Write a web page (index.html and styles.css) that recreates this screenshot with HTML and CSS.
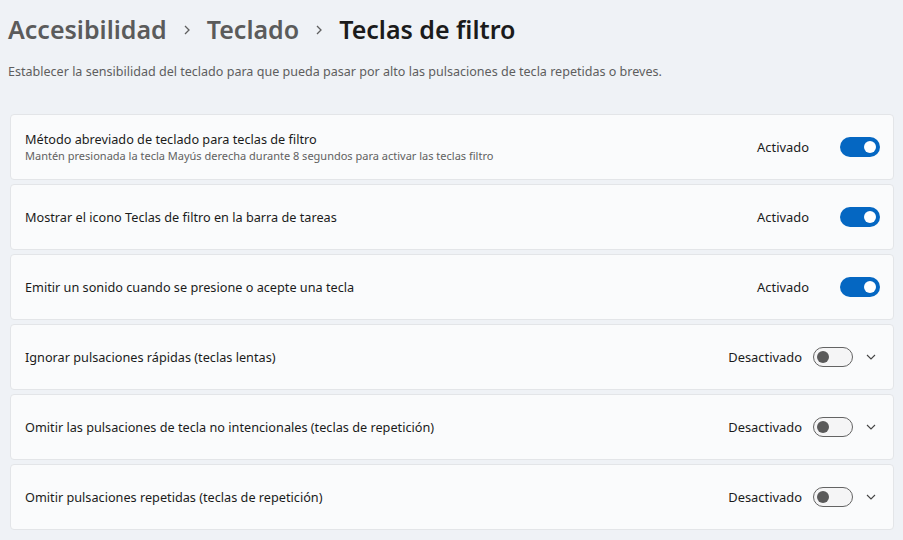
FILE: index.html
```html
<!DOCTYPE html>
<html lang="es">
<head>
<meta charset="utf-8">
<link rel="stylesheet" href="styles.css">
</head>
<body>
<div class="page">
  <h1 class="crumbs">
    <span class="crumb">Accesibilidad</span>
    <svg class="sep" width="10" height="12" viewBox="0 0 10 12"><path d="M3 2 L7 6 L3 10" fill="none" stroke="#5f5f5f" stroke-width="1.3"/></svg>
    <span class="crumb">Teclado</span>
    <svg class="sep" width="10" height="12" viewBox="0 0 10 12"><path d="M3 2 L7 6 L3 10" fill="none" stroke="#5f5f5f" stroke-width="1.3"/></svg>
    <span class="crumb current">Teclas de filtro</span>
  </h1>
  <p class="desc">Establecer la sensibilidad del teclado para que pueda pasar por alto las pulsaciones de tecla repetidas o breves.</p>

  <div class="list">
    <div class="card">
      <div class="text">
        <div class="title">Método abreviado de teclado para teclas de filtro</div>
        <div class="sub">Mantén presionada la tecla Mayús derecha durante 8 segundos para activar las teclas filtro</div>
      </div>
      <div class="ctrl">
        <span class="state">Activado</span>
        <span class="toggle on"><span class="knob"></span></span>
      </div>
    </div>
    <div class="card">
      <div class="text"><div class="title">Mostrar el icono Teclas de filtro en la barra de tareas</div></div>
      <div class="ctrl">
        <span class="state">Activado</span>
        <span class="toggle on"><span class="knob"></span></span>
      </div>
    </div>
    <div class="card">
      <div class="text"><div class="title">Emitir un sonido cuando se presione o acepte una tecla</div></div>
      <div class="ctrl">
        <span class="state">Activado</span>
        <span class="toggle on"><span class="knob"></span></span>
      </div>
    </div>
    <div class="card exp">
      <div class="text"><div class="title">Ignorar pulsaciones rápidas (teclas lentas)</div></div>
      <div class="ctrl">
        <span class="state">Desactivado</span>
        <span class="toggle off"><span class="knob"></span></span>
        <svg class="chev" width="10" height="8" viewBox="0 0 10 8"><path d="M1 2 L5 6 L9 2" fill="none" stroke="#444" stroke-width="1.1"/></svg>
      </div>
    </div>
    <div class="card exp">
      <div class="text"><div class="title">Omitir las pulsaciones de tecla no intencionales (teclas de repetición)</div></div>
      <div class="ctrl">
        <span class="state">Desactivado</span>
        <span class="toggle off"><span class="knob"></span></span>
        <svg class="chev" width="10" height="8" viewBox="0 0 10 8"><path d="M1 2 L5 6 L9 2" fill="none" stroke="#444" stroke-width="1.1"/></svg>
      </div>
    </div>
    <div class="card exp">
      <div class="text"><div class="title">Omitir pulsaciones repetidas (teclas de repetición)</div></div>
      <div class="ctrl">
        <span class="state">Desactivado</span>
        <span class="toggle off"><span class="knob"></span></span>
        <svg class="chev" width="10" height="8" viewBox="0 0 10 8"><path d="M1 2 L5 6 L9 2" fill="none" stroke="#444" stroke-width="1.1"/></svg>
      </div>
    </div>
  </div>
</div>
</body>
</html>
```

FILE: styles.css
```css
* { box-sizing: border-box; }
html, body { margin: 0; padding: 0; }
body {
  background: #eff2f6;
  font-family: "Noto Sans", "Open Sans", sans-serif;
  color: #1b1b1b;
  width: 903px;
  height: 540px;
  overflow: hidden;
}
.page { padding: 10px 9px 0 10px; }
.crumbs {
  margin: 0 0 0 -2px;
  display: flex;
  align-items: center;
  gap: 15px;
  font-weight: 600;
  font-size: 25px;
  line-height: 38px;
  height: 38px;
}
.crumb { color: #5b5b5b; }
.crumb.current { color: #1b1b1b; }
.sep { margin-top: 2px; }
.desc {
  margin: 15px 0 0 -2px;
  font-size: 12.55px;
  line-height: 18px;
  color: #5e5e5e;
}
.list {
  margin-top: 33px;
  display: flex;
  flex-direction: column;
  gap: 4px;
}
.card {
  height: 66px;
  background: #fafbfc;
  border: 1px solid #e3e5e8;
  border-radius: 4px;
  display: flex;
  align-items: center;
  justify-content: space-between;
  padding: 0 13px 0 14px;
}
.card.exp { padding-right: 17px; }
.title { font-size: 12.7px; line-height: 17px; color: #1b1b1b; }
.sub { font-size: 11px; line-height: 15px; color: #616161; }
.ctrl { display: flex; align-items: center; }
.state { font-size: 12.9px; color: #1b1b1b; margin-right: 31px; }
.card.exp .state { margin-right: 11px; }
.toggle {
  width: 40px; height: 20px; border-radius: 10px;
  position: relative; display: inline-block;
}
.toggle.on { background: #0567c2; }
.toggle.off { background: #f5f5f6; border: 1px solid #636363; }
.knob { position: absolute; border-radius: 50%; }
.toggle.on .knob { width: 12px; height: 12px; background: #fff; right: 4px; top: 4px; }
.toggle.off .knob { width: 12px; height: 12px; background: #5a5a5a; left: 3px; top: 3px; }
.chev { margin-left: 13px; }
```
